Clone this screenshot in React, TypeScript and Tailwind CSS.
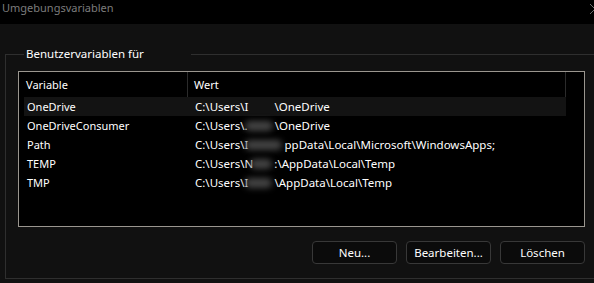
import React from "react";

// Windows "Umgebungsvariablen" dialog, dark theme

type Row = {
  name: string;
  prefix: string;
  hint: string; // first letter of the user name, partly covered by the blur
  hidden: number; // width of the redacted part
  suffix: string;
};

const rows: Row[] = [
  { name: "OneDrive", prefix: "C:\\Users\\", hint: "I", hidden: 26, suffix: "\\OneDrive" },
  { name: "OneDriveConsumer", prefix: "C:\\Users\\", hint: ".", hidden: 27, suffix: "\\OneDrive" },
  { name: "Path", prefix: "C:\\Users\\", hint: "I", hidden: 36, suffix: "ppData\\Local\\Microsoft\\WindowsApps;" },
  { name: "TEMP", prefix: "C:\\Users\\", hint: "N", hidden: 21, suffix: ":\\AppData\\Local\\Temp" },
  { name: "TMP", prefix: "C:\\Users\\", hint: "I", hidden: 26, suffix: "\\AppData\\Local\\Temp" },
];

function Redacted({ width, faint }: { width: number; faint?: boolean }) {
  return (
    <span className="relative inline-block h-[12px] align-middle" style={{ width }}>
      {!faint && (
        <span className="absolute -left-[3px] right-[2px] inset-y-[1px] rounded-full bg-[#444444] blur-[3px]" />
      )}
    </span>
  );
}

function DialogButton({ label }: { label: string }) {
  return (
    <button className="flex h-[23px] w-[85px] items-center justify-center rounded-[4px] border border-[#383838] bg-[#0b0b0b] text-[11.5px] text-white">
      {label}
    </button>
  );
}

export default function App() {
  return (
    <div
      className="flex h-[283px] w-[594px] flex-col overflow-hidden bg-[#111111] text-[11px] leading-[16px] text-white"
      style={{ fontFamily: '"Segoe UI", "Noto Sans", "Liberation Sans", sans-serif' }}
    >
      {/* title bar */}
      <div className="flex h-[24px] shrink-0 justify-between overflow-hidden bg-black pl-[2px]">
        <span className="text-[11px] text-[#7c7c7c]">Umgebungsvariablen</span>
        <svg width="10" height="10" viewBox="0 0 10 10" className="mt-[4px] -mr-[6px] shrink-0">
          <path d="M0 0 L10 10 M10 0 L0 10" stroke="#6e6e6e" strokeWidth="1" fill="none" />
        </svg>
      </div>

      {/* group box */}
      <fieldset className="ml-[5px] mt-[22px] flex flex-col border border-r-0 border-[#2f2f2f] pl-[12px] pr-[9px] pt-[9px] pb-[14px]">
        <legend className="ml-[6px] px-[2px] text-[11.5px] leading-[16px]">
          Benutzervariablen für <Redacted width={42} faint />
        </legend>

        {/* list view */}
        <div className="flex h-[156px] flex-col border border-[#9a968f] bg-black">
          <div className="flex h-[25px] shrink-0">
            <div className="flex w-[169px] items-center border-r border-[#2b2b2b] pl-[7px]">Variable</div>
            <div className="flex w-[378px] items-center border-r border-[#2b2b2b] pl-[6px]">Wert</div>
            <div className="flex-1" />
          </div>
          <div className="flex w-[547px] flex-col pl-[5px]">
            {rows.map((row, i) => (
              <div
                key={row.name}
                className={`flex h-[19px] items-center ${i === 0 ? "bg-[#131313]" : ""}`}
              >
                <span className="w-[163px] shrink-0 pl-[3px]">{row.name}</span>
                <span className="flex items-center whitespace-nowrap pl-[8px] text-[11.5px]">
                  {row.prefix}
                  {row.hint}
                  <Redacted width={row.hidden} faint={i === 0} />
                  {row.suffix}
                </span>
              </div>
            ))}
          </div>
        </div>

        <div className="mt-[14px] flex justify-end gap-[9px]">
          <DialogButton label="Neu..." />
          <DialogButton label="Bearbeiten..." />
          <DialogButton label="Löschen" />
        </div>
      </fieldset>
    </div>
  );
}
